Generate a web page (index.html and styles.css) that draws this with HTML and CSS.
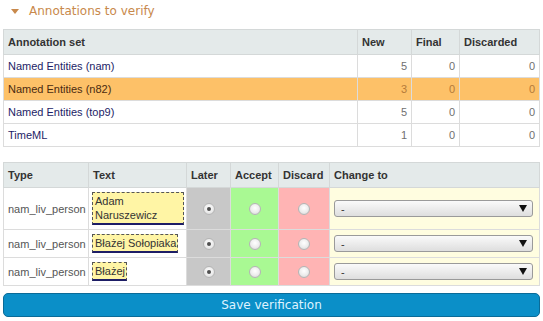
FILE: index.html
```html
<!DOCTYPE html>
<html lang="en">
<head>
    <meta charset="UTF-8">
    <meta name="viewport" content="width=device-width, initial-scale=1.0">
    <title>Annotations to verify</title>
    <link rel="stylesheet" href="styles.css">
</head>
<body>
    <div class="section-title"><span class="toggle"></span>Annotations to verify</div>

    <table class="grid sets">
        <thead>
            <tr>
                <th>Annotation set</th>
                <th class="col-new">New</th>
                <th class="col-final">Final</th>
                <th class="col-disc">Discarded</th>
            </tr>
        </thead>
        <tbody>
            <tr>
                <td><a href="#">Named Entities (nam)</a></td>
                <td class="num">5</td><td class="num">0</td><td class="num">0</td>
            </tr>
            <tr class="selected">
                <td><a href="#">Named Entities (n82)</a></td>
                <td class="num">3</td><td class="num">0</td><td class="num">0</td>
            </tr>
            <tr>
                <td><a href="#">Named Entities (top9)</a></td>
                <td class="num">5</td><td class="num">0</td><td class="num">0</td>
            </tr>
            <tr>
                <td><a href="#">TimeML</a></td>
                <td class="num">1</td><td class="num">0</td><td class="num">0</td>
            </tr>
        </tbody>
    </table>

    <form id="verifyForm">
        <table class="grid verify">
            <thead>
                <tr>
                    <th class="col-type">Type</th>
                    <th class="col-text">Text</th>
                    <th class="col-later">Later</th>
                    <th class="col-accept">Accept</th>
                    <th class="col-discard">Discard</th>
                    <th>Change to</th>
                </tr>
            </thead>
            <tbody>
                <tr class="tall">
                    <td class="type">nam_liv_person</td>
                    <td class="text"><span class="annotation">Adam Naruszewicz</span></td>
                    <td class="later"><input type="radio" name="a1" checked></td>
                    <td class="accept"><input type="radio" name="a1"></td>
                    <td class="discard"><input type="radio" name="a1"></td>
                    <td class="change"><span class="select-wrap"><select><option>-</option></select></span></td>
                </tr>
                <tr>
                    <td class="type">nam_liv_person</td>
                    <td class="text"><span class="annotation">Błażej Sołopiaka</span></td>
                    <td class="later"><input type="radio" name="a2" checked></td>
                    <td class="accept"><input type="radio" name="a2"></td>
                    <td class="discard"><input type="radio" name="a2"></td>
                    <td class="change"><span class="select-wrap"><select><option>-</option></select></span></td>
                </tr>
                <tr>
                    <td class="type">nam_liv_person</td>
                    <td class="text"><span class="annotation">Błażej</span></td>
                    <td class="later"><input type="radio" name="a3" checked></td>
                    <td class="accept"><input type="radio" name="a3"></td>
                    <td class="discard"><input type="radio" name="a3"></td>
                    <td class="change"><span class="select-wrap"><select><option>-</option></select></span></td>
                </tr>
            </tbody>
        </table>
        <button type="submit" class="save">Save verification</button>
    </form>
</body>
</html>
```

FILE: styles.css
```css
body {
    font-family: "Liberation Sans", Arial, sans-serif;
    font-size: 11px;
    color: #555;
    margin: 0;
    padding: 0 3px;
}
.section-title {
    display: flex;
    align-items: center;
    height: 22px;
    margin-bottom: 7px;
    padding-left: 8px;
    font-family: "DejaVu Sans", Verdana, sans-serif;
    font-size: 12px;
    color: #c8894c;
}
.toggle {
    width: 0;
    height: 0;
    border-left: 4px solid transparent;
    border-right: 4px solid transparent;
    border-top: 5px solid #c8894c;
    margin-right: 10px;
}
.grid {
    width: 100%;
    table-layout: fixed;
    border-collapse: collapse;
    border: 1px solid #c8c8c8;
}
.grid th {
    box-sizing: border-box;
    background-color: #e4eaea;
    color: #333;
    font-weight: bold;
    text-align: left;
    height: 25px;
    padding: 0 4px;
    border: 1px solid #d4d8d8;
}
.grid td {
    height: 22px;
    padding: 0 4px;
    border: 1px solid #dcdcdc;
}
.grid a {
    color: #1d1d66;
    text-decoration: none;
}
.grid td.num {
    text-align: right;
    color: #707070;
}
.col-new { width: 54px; }
.col-final { width: 48px; }
.col-disc { width: 80px; }
.grid .selected td {
    background-color: #fdc168;
    color: #b47a3a;
}
.selected a {
    color: #4a2a10;
}
.verify {
    margin-top: 15px;
}
.col-type { width: 85px; }
.col-text { width: 98px; }
.col-later { width: 44px; }
.col-accept { width: 48px; }
.col-discard { width: 51px; }
.verify td {
    height: 27px;
}
.verify .tall td {
    height: 41px;
}
.grid td.text {
    padding: 0 2px 0 3px;
}
.annotation {
    display: inline-block;
    background-color: #fff5a5;
    border: 1px dashed #555;
    border-bottom: 2px solid #1d1d66;
    padding: 1px 1px 1px 2px;
    line-height: 14px;
    color: #333;
}
.later, .accept, .discard {
    text-align: center;
}
.later { background-color: #c8c8c8; }
.accept { background-color: #a9f993; }
.discard { background-color: #ffb4b4; }
.change {
    background-color: #fffde0;
}
.grid td.change {
    padding: 0 6px 0 4px;
}
input[type="radio"] {
    appearance: none;
    box-sizing: border-box;
    width: 12px;
    height: 12px;
    margin: 0;
    border-radius: 50%;
    border: 1px solid #b4b4b4;
    background: radial-gradient(circle at 50% 40%, #fff 0, #ececec 55%, #d2d2d2 100%);
    vertical-align: middle;
    position: relative;
}
input[type="radio"]:checked::after {
    content: "";
    position: absolute;
    left: 3px;
    top: 3px;
    width: 4px;
    height: 4px;
    border-radius: 50%;
    background-color: #505050;
}
.select-wrap {
    display: block;
    position: relative;
}
.select-wrap::after {
    content: "";
    position: absolute;
    right: 6px;
    top: 5px;
    border-left: 4px solid transparent;
    border-right: 4px solid transparent;
    border-top: 7px solid #111;
    pointer-events: none;
}
select {
    appearance: none;
    display: block;
    width: 100%;
    height: 17px;
    padding: 0 6px;
    font-family: "Liberation Sans", Arial, sans-serif;
    font-size: 11px;
    color: #333;
    border: 1px solid #9a9a9a;
    border-radius: 3px;
    background: linear-gradient(#fafafa, #dedede);
}
.save {
    display: block;
    width: 100%;
    height: 24px;
    margin-top: 7px;
    font-family: "DejaVu Sans", Verdana, sans-serif;
    font-size: 12px;
    color: #dff3ff;
    background-color: #0b8fc8;
    border: 1px solid #0a6b98;
    border-radius: 5px;
    cursor: pointer;
}
```
